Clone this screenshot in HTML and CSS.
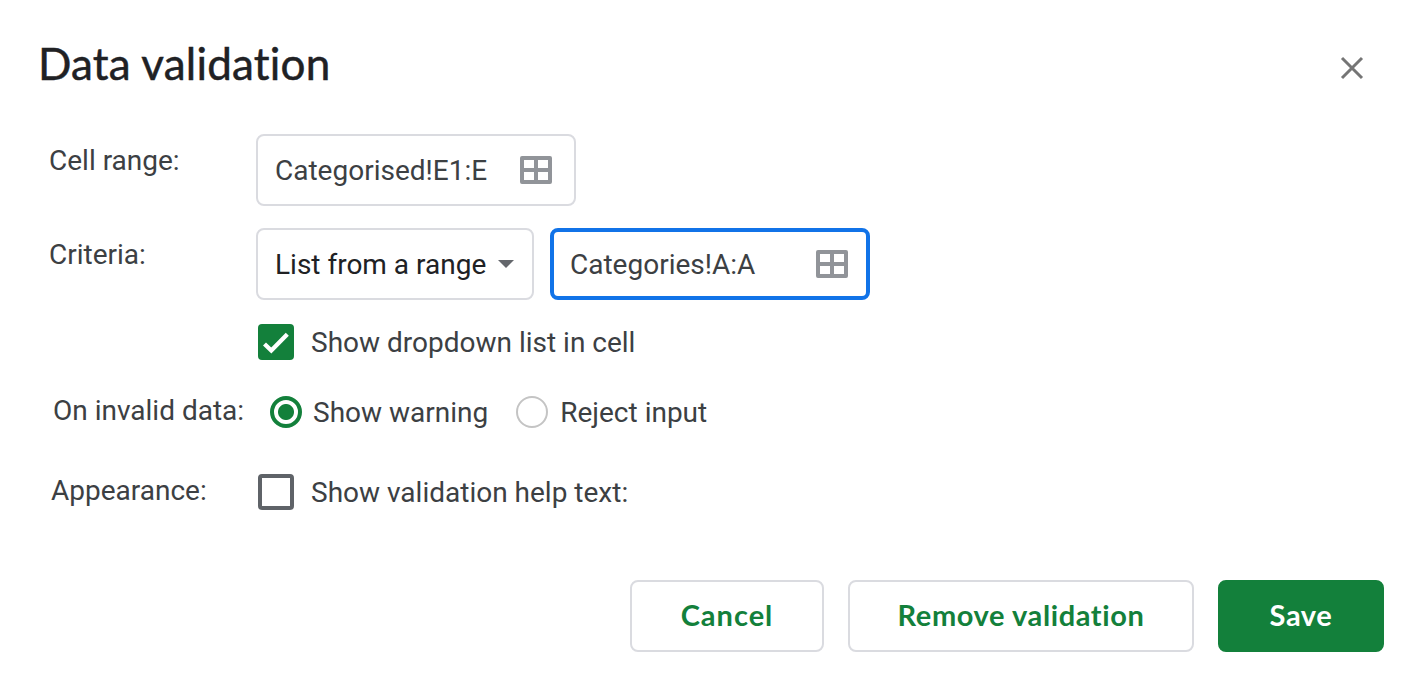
FILE: index.html
```html
<!DOCTYPE html>
<html lang="en">
<head>
<meta charset="utf-8">
<title>Data validation</title>
<link rel="stylesheet" href="styles.css">
</head>
<body>
<main class="dialog">
  <header class="header">
    <h1 class="title">Data validation</h1>
    <svg class="close" viewBox="0 0 24 24"><path d="M2 2 22 22M22 2 2 22"/></svg>
  </header>
  <div class="row row-range">
    <span class="label">Cell range:</span>
    <div class="field"><span class="text">Categorised!E1:E</span><svg class="grid" viewBox="0 0 32 28"><path fill-rule="evenodd" d="M2 0h28a2 2 0 0 1 2 2v24a2 2 0 0 1-2 2H2a2 2 0 0 1-2-2V2a2 2 0 0 1 2-2ZM4 4v8h10V4ZM18 4v8h10V4ZM4 16v8h10v-8ZM18 16v8h10v-8Z"/></svg></div>
  </div>
  <div class="row row-criteria">
    <span class="label">Criteria:</span>
    <div class="select"><span class="text">List from a range</span><span class="arrow"></span></div>
    <div class="field focused"><span class="text">Categories!A:A</span><svg class="grid" viewBox="0 0 32 28"><path fill-rule="evenodd" d="M2 0h28a2 2 0 0 1 2 2v24a2 2 0 0 1-2 2H2a2 2 0 0 1-2-2V2a2 2 0 0 1 2-2ZM4 4v8h10V4ZM18 4v8h10V4ZM4 16v8h10v-8ZM18 16v8h10v-8Z"/></svg></div>
  </div>
  <div class="row row-dropdown">
    <span class="checkbox checked"><svg viewBox="0 0 36 36"><path d="m6.5 20 6.8 6.5L29.3 10.3"/></svg></span>
    <span class="text">Show dropdown list in cell</span>
  </div>
  <div class="row row-invalid">
    <span class="label">On invalid data:</span>
    <span class="radio selected"></span><span class="text warning">Show warning</span>
    <span class="radio"></span><span class="text">Reject input</span>
  </div>
  <div class="row row-appearance">
    <span class="label">Appearance:</span>
    <span class="checkbox"></span><span class="text">Show validation help text:</span>
  </div>
  <footer class="actions">
    <button class="btn cancel">Cancel</button>
    <button class="btn remove">Remove validation</button>
    <button class="btn save">Save</button>
  </footer>
</main>
</body>
</html>
```
FILE: styles.css
```css
* { box-sizing: border-box; }
body { margin: 0; background: #fff; color: #3c4043; font: 28px/36px Roboto, sans-serif; white-space: nowrap; }
.dialog { width: 1424px; height: 686px; padding: 34px 40px 0; display: flex; flex-direction: column; overflow: hidden; }
.header { height: 100px; display: flex; justify-content: space-between; }
.title { margin: -2px 0 0 -2px; color: #202124; font: 400 44px/62px Lato, sans-serif; letter-spacing: 0.2px; font-variant-ligatures: none; -webkit-text-stroke: 0.5px #202124; }
.close { width: 24px; height: 24px; margin: 22px 20px 0 0; stroke: #757575; stroke-width: 3; fill: none; }
.row { display: flex; align-items: center; }
.label { width: 207px; align-self: flex-start; }
.text { padding-top: 2px; }
.row-range, .row-criteria { height: 72px; margin-bottom: 22px; padding-left: 9px; }
.row-range .label, .row-criteria .label { padding-top: 9px; }
.field, .select { height: 72px; border: 2px solid #dadbe0; border-radius: 8px; display: flex; align-items: center; justify-content: space-between; padding: 0 22px 0 17px; }
.field { width: 320px; }
.select { width: 278px; color: #202124; padding-right: 18px; margin-right: 16px; }
.focused { border: 4px solid #1173e8; padding: 0 18px 0 16px; }
.grid { width: 32px; height: 28px; fill: #919499; }
.arrow { border: 8px solid transparent; border-top-color: #64676c; border-bottom: 0; }
.checkbox { width: 36px; height: 36px; border: 4px solid #5f6368; border-radius: 4px; flex: none; margin-right: 17px; }
.checked { border: 0; background: #13803b; }
.checked svg { display: block; fill: none; stroke: #fff; stroke-width: 4.3; }
.row-dropdown { height: 36px; margin-top: 2px; padding-left: 218px; }
.row-invalid { height: 36px; margin-top: 34px; padding-left: 13px; }
.row-invalid .label { width: 217px; margin-top: -1px; }
.radio { width: 32px; height: 32px; border: 2px solid #c4c4c4; border-radius: 50%; margin-right: 12px; }
.selected { border: 4px solid #13803b; background: radial-gradient(circle, #13803b 7.5px, #fff 8.5px); margin-right: 11px; }
.warning { margin-right: 28px; }
.row-appearance { height: 36px; margin-top: 44px; padding-left: 11px; }
.row-appearance .label { margin-top: -1px; }
.actions { display: flex; justify-content: flex-end; gap: 24px; margin-top: 70px; }
.btn { height: 72px; padding: 0 0 2px; border: 2px solid #dadbe0; border-radius: 8px; background: #fff; color: #13803b; font: 700 29px/36px Lato, sans-serif; letter-spacing: 0.6px; font-variant-ligatures: none; }
.cancel { width: 194px; letter-spacing: 1px; }
.remove { width: 346px; }
.save { width: 166px; color: #fff; background: #13803b; border-color: #13803b; }
```
